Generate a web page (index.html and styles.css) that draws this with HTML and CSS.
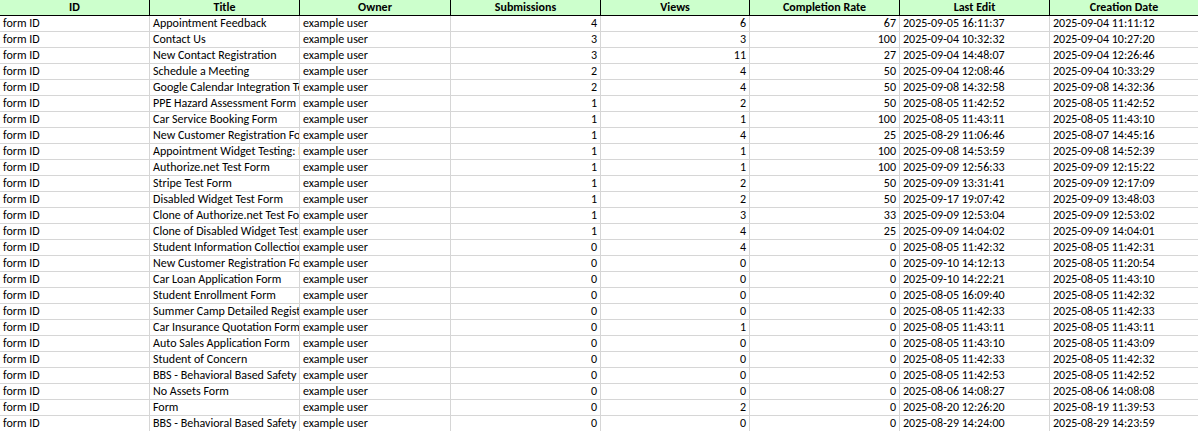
FILE: index.html
```html
<!DOCTYPE html>
<html>
<head>
<meta charset="utf-8">
<link rel="stylesheet" href="styles.css">
</head>
<body>
<div class="sheet">
  <div class="row head">
    <div class="c">ID</div><div class="c">Title</div><div class="c">Owner</div><div class="c">Submissions</div><div class="c">Views</div><div class="c">Completion Rate</div><div class="c">Last Edit</div><div class="c">Creation Date</div>
  </div>
  <div class="row"><div class="c">form ID</div><div class="c">Appointment Feedback</div><div class="c">example user</div><div class="c n">4</div><div class="c n">6</div><div class="c n">67</div><div class="c">2025-09-05 16:11:37</div><div class="c">2025-09-04 11:11:12</div></div>
  <div class="row"><div class="c">form ID</div><div class="c">Contact Us</div><div class="c">example user</div><div class="c n">3</div><div class="c n">3</div><div class="c n">100</div><div class="c">2025-09-04 10:32:32</div><div class="c">2025-09-04 10:27:20</div></div>
  <div class="row"><div class="c">form ID</div><div class="c">New Contact Registration</div><div class="c">example user</div><div class="c n">3</div><div class="c n">11</div><div class="c n">27</div><div class="c">2025-09-04 14:48:07</div><div class="c">2025-09-04 12:26:46</div></div>
  <div class="row"><div class="c">form ID</div><div class="c">Schedule a Meeting</div><div class="c">example user</div><div class="c n">2</div><div class="c n">4</div><div class="c n">50</div><div class="c">2025-09-04 12:08:46</div><div class="c">2025-09-04 10:33:29</div></div>
  <div class="row"><div class="c">form ID</div><div class="c">Google Calendar Integration Test</div><div class="c">example user</div><div class="c n">2</div><div class="c n">4</div><div class="c n">50</div><div class="c">2025-09-08 14:32:58</div><div class="c">2025-09-08 14:32:36</div></div>
  <div class="row"><div class="c">form ID</div><div class="c">PPE Hazard Assessment Form</div><div class="c">example user</div><div class="c n">1</div><div class="c n">2</div><div class="c n">50</div><div class="c">2025-08-05 11:42:52</div><div class="c">2025-08-05 11:42:52</div></div>
  <div class="row"><div class="c">form ID</div><div class="c">Car Service Booking Form</div><div class="c">example user</div><div class="c n">1</div><div class="c n">1</div><div class="c n">100</div><div class="c">2025-08-05 11:43:11</div><div class="c">2025-08-05 11:43:10</div></div>
  <div class="row"><div class="c">form ID</div><div class="c">New Customer Registration Form</div><div class="c">example user</div><div class="c n">1</div><div class="c n">4</div><div class="c n">25</div><div class="c">2025-08-29 11:06:46</div><div class="c">2025-08-07 14:45:16</div></div>
  <div class="row"><div class="c">form ID</div><div class="c">Appointment Widget Testing: Form</div><div class="c">example user</div><div class="c n">1</div><div class="c n">1</div><div class="c n">100</div><div class="c">2025-09-08 14:53:59</div><div class="c">2025-09-08 14:52:39</div></div>
  <div class="row"><div class="c">form ID</div><div class="c">Authorize.net Test Form</div><div class="c">example user</div><div class="c n">1</div><div class="c n">1</div><div class="c n">100</div><div class="c">2025-09-09 12:56:33</div><div class="c">2025-09-09 12:15:22</div></div>
  <div class="row"><div class="c">form ID</div><div class="c">Stripe Test Form</div><div class="c">example user</div><div class="c n">1</div><div class="c n">2</div><div class="c n">50</div><div class="c">2025-09-09 13:31:41</div><div class="c">2025-09-09 12:17:09</div></div>
  <div class="row"><div class="c">form ID</div><div class="c">Disabled Widget Test Form</div><div class="c">example user</div><div class="c n">1</div><div class="c n">2</div><div class="c n">50</div><div class="c">2025-09-17 19:07:42</div><div class="c">2025-09-09 13:48:03</div></div>
  <div class="row"><div class="c">form ID</div><div class="c">Clone of Authorize.net Test Form</div><div class="c">example user</div><div class="c n">1</div><div class="c n">3</div><div class="c n">33</div><div class="c">2025-09-09 12:53:04</div><div class="c">2025-09-09 12:53:02</div></div>
  <div class="row"><div class="c">form ID</div><div class="c">Clone of Disabled Widget Test Form</div><div class="c">example user</div><div class="c n">1</div><div class="c n">4</div><div class="c n">25</div><div class="c">2025-09-09 14:04:02</div><div class="c">2025-09-09 14:04:01</div></div>
  <div class="row"><div class="c">form ID</div><div class="c">Student Information Collection</div><div class="c">example user</div><div class="c n">0</div><div class="c n">4</div><div class="c n">0</div><div class="c">2025-08-05 11:42:32</div><div class="c">2025-08-05 11:42:31</div></div>
  <div class="row"><div class="c">form ID</div><div class="c">New Customer Registration Form</div><div class="c">example user</div><div class="c n">0</div><div class="c n">0</div><div class="c n">0</div><div class="c">2025-09-10 14:12:13</div><div class="c">2025-08-05 11:20:54</div></div>
  <div class="row"><div class="c">form ID</div><div class="c">Car Loan Application Form</div><div class="c">example user</div><div class="c n">0</div><div class="c n">0</div><div class="c n">0</div><div class="c">2025-09-10 14:22:21</div><div class="c">2025-08-05 11:43:10</div></div>
  <div class="row"><div class="c">form ID</div><div class="c">Student Enrollment Form</div><div class="c">example user</div><div class="c n">0</div><div class="c n">0</div><div class="c n">0</div><div class="c">2025-08-05 16:09:40</div><div class="c">2025-08-05 11:42:32</div></div>
  <div class="row"><div class="c">form ID</div><div class="c">Summer Camp Detailed Registration</div><div class="c">example user</div><div class="c n">0</div><div class="c n">0</div><div class="c n">0</div><div class="c">2025-08-05 11:42:33</div><div class="c">2025-08-05 11:42:33</div></div>
  <div class="row"><div class="c">form ID</div><div class="c">Car Insurance Quotation Form</div><div class="c">example user</div><div class="c n">0</div><div class="c n">1</div><div class="c n">0</div><div class="c">2025-08-05 11:43:11</div><div class="c">2025-08-05 11:43:11</div></div>
  <div class="row"><div class="c">form ID</div><div class="c">Auto Sales Application Form</div><div class="c">example user</div><div class="c n">0</div><div class="c n">0</div><div class="c n">0</div><div class="c">2025-08-05 11:43:10</div><div class="c">2025-08-05 11:43:09</div></div>
  <div class="row"><div class="c">form ID</div><div class="c">Student of Concern</div><div class="c">example user</div><div class="c n">0</div><div class="c n">0</div><div class="c n">0</div><div class="c">2025-08-05 11:42:33</div><div class="c">2025-08-05 11:42:32</div></div>
  <div class="row"><div class="c">form ID</div><div class="c">BBS - Behavioral Based Safety Form</div><div class="c">example user</div><div class="c n">0</div><div class="c n">0</div><div class="c n">0</div><div class="c">2025-08-05 11:42:53</div><div class="c">2025-08-05 11:42:52</div></div>
  <div class="row"><div class="c">form ID</div><div class="c">No Assets Form</div><div class="c">example user</div><div class="c n">0</div><div class="c n">0</div><div class="c n">0</div><div class="c">2025-08-06 14:08:27</div><div class="c">2025-08-06 14:08:08</div></div>
  <div class="row"><div class="c">form ID</div><div class="c">Form</div><div class="c">example user</div><div class="c n">0</div><div class="c n">2</div><div class="c n">0</div><div class="c">2025-08-20 12:26:20</div><div class="c">2025-08-19 11:39:53</div></div>
  <div class="row"><div class="c">form ID</div><div class="c">BBS - Behavioral Based Safety Form</div><div class="c">example user</div><div class="c n">0</div><div class="c n">0</div><div class="c n">0</div><div class="c">2025-08-29 14:24:00</div><div class="c">2025-08-29 14:23:59</div></div>
</div>
</body>
</html>
```

FILE: styles.css
```css
html, body {
  margin: 0;
  padding: 0;
  background: #ffffff;
}
.sheet {
  width: 1198px;
  font-family: "Carlito", "Lato", "Liberation Sans", sans-serif;
  font-size: 12px;
  color: #000;
}
.row {
  display: grid;
  grid-template-columns: 150px 150px 151px 150px 149px 150px 150px 148px;
  height: 16px;
}
.c {
  box-sizing: border-box;
  height: 16px;
  line-height: 15px;
  padding: 0 3px;
  border-right: 1px solid #d6d6d6;
  border-bottom: 1px solid #d6d6d6;
  white-space: nowrap;
  overflow: hidden;
}
.c:last-child {
  border-right: none;
}
.n {
  text-align: right;
}
.head .c {
  background: #ccffcc;
  font-weight: bold;
  text-align: center;
  border-right-color: #000;
  border-bottom-color: #000;
}
```
